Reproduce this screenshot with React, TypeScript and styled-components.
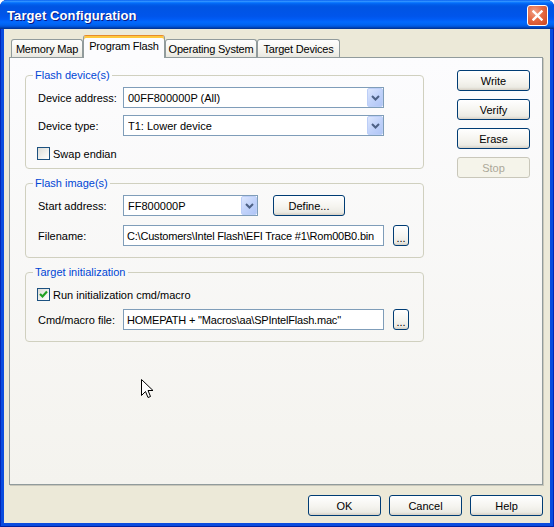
import React from "react";
import styled, { createGlobalStyle, css } from "styled-components";

const GlobalStyle = createGlobalStyle`
	html, body {
		margin: 0;
		padding: 0;
		background: #ffffff;
	}
	body {
		font-family: "Liberation Sans", Arial, sans-serif;
		font-size: 11px;
		color: #000000;
		overflow: hidden;
	}
	* {
		box-sizing: border-box;
	}
`;

const ChevronDown: React.FC = () => (
	<svg width="9" height="6" viewBox="0 0 9 6">
		<path d="M1 1 L4.5 4.5 L8 1" fill="none" stroke="#4D6185" strokeWidth="2" />
	</svg>
);

const CheckMark: React.FC = () => (
	<svg width="9" height="9" viewBox="0 0 9 9">
		<path d="M1 4 L3.5 6.5 L8 1.5" fill="none" stroke="#21A121" strokeWidth="2.2" />
	</svg>
);

const CloseIcon: React.FC = () => (
	<svg width="11" height="11" viewBox="0 0 11 11">
		<path d="M1.5 1.5 L9.5 9.5 M9.5 1.5 L1.5 9.5" stroke="#ffffff" strokeWidth="2.4" strokeLinecap="square" />
	</svg>
);

const MouseCursor: React.FC = () => (
	<svg width="13" height="21" viewBox="0 0 13 21">
		<path
			d="M0.5 0.5 L0.5 16.5 L4.5 12.5 L7 18.5 L9.5 17.5 L7 11.5 L12 11.5 Z"
			fill="#ffffff"
			stroke="#000000"
			strokeWidth="1"
		/>
	</svg>
);

interface ComboProps {
	value: string,
	width: number,
}

const Combo: React.FC<ComboProps> = ({value, width}) => (
	<ComboBox $width={width}>
		<ComboText>{value}</ComboText>
		<DropButton><ChevronDown /></DropButton>
	</ComboBox>
);

interface CheckProps {
	label: string,
	checked?: boolean,
}

const Check: React.FC<CheckProps> = ({label, checked}) => (
	<CheckLabel>
		<CheckBox>{checked && <CheckMark />}</CheckBox>
		{label}
	</CheckLabel>
);

const tabs = [
	{ name: "Memory Map", width: 72 },
	{ name: "Program Flash", width: 82 },
	{ name: "Operating System", width: 92 },
	{ name: "Target Devices", width: 83 },
];

const App: React.FC = () => {
	return (
		<Window>
			<GlobalStyle />
			<TitleBar>
				<Title>Target Configuration</Title>
				<CloseButton><CloseIcon /></CloseButton>
			</TitleBar>
			<Body>
				<TabStrip>
					{tabs.map(t => (
						<Tab key={t.name} $width={t.width} $active={t.name === "Program Flash"}>{t.name}</Tab>
					))}
				</TabStrip>
				<Panel>
					<Groups>
						<Group>
							<Legend>Flash device(s)</Legend>
							<GroupBody $gap={7} $bottom={4}>
								<Row>
									<FieldLabel>Device address:</FieldLabel>
									<Combo value="00FF800000P (All)" width={261} />
								</Row>
								<Row>
									<FieldLabel>Device type:</FieldLabel>
									<Combo value="T1: Lower device" width={261} />
								</Row>
								<Row>
									<Check label="Swap endian" />
								</Row>
							</GroupBody>
						</Group>
						<Group>
							<Legend>Flash image(s)</Legend>
							<GroupBody $gap={9} $bottom={11}>
								<Row>
									<FieldLabel>Start address:</FieldLabel>
									<Combo value="FF800000P" width={135} />
									<WideButton>Define...</WideButton>
								</Row>
								<Row>
									<FieldLabel>Filename:</FieldLabel>
									<TextField readOnly value="C:\Customers\Intel Flash\EFI Trace #1\Rom00B0.bin" />
									<BrowseButton>...</BrowseButton>
								</Row>
							</GroupBody>
						</Group>
						<Group>
							<Legend>Target initialization</Legend>
							<GroupBody $gap={4} $bottom={11}>
								<Row>
									<Check label="Run initialization cmd/macro" checked />
								</Row>
								<Row>
									<FieldLabel>Cmd/macro file:</FieldLabel>
									<TextField readOnly value={'HOMEPATH + "Macros\\aa\\SPIntelFlash.mac"'} />
									<BrowseButton>...</BrowseButton>
								</Row>
							</GroupBody>
						</Group>
					</Groups>
					<ActionColumn>
						<Button>Write</Button>
						<Button>Verify</Button>
						<Button>Erase</Button>
						<Button disabled>Stop</Button>
					</ActionColumn>
				</Panel>
				<Footer>
					<Button>OK</Button>
					<Button>Cancel</Button>
					<Button>Help</Button>
				</Footer>
			</Body>
			<CursorSpot><MouseCursor /></CursorSpot>
		</Window>
	);
};

const Window = styled.div`
	position: relative;
	width: 554px;
	height: 527px;
	display: flex;
	flex-direction: column;
	background: #0A4CDF;
	border-radius: 7px 7px 0 0;
	overflow: hidden;
	box-shadow: inset 1px 0 0 #0027B8, inset -1px 0 0 #0027B8, inset 0 -1px 0 #00209E;
`;

const TitleBar = styled.div`
	height: 29px;
	flex: none;
	display: flex;
	align-items: center;
	justify-content: space-between;
	padding: 1px 6px 0 7px;
	background: linear-gradient(to bottom,
		#0058EE 0%, #3593FF 4%, #288EFF 6%, #127DFF 8%, #036FFC 10%,
		#0262EE 14%, #0057E5 20%, #0054E3 24%, #0055EB 56%, #005BF5 66%,
		#026AFE 76%, #0062EF 86%, #0052D6 92%, #0040AB 96%, #003092 100%);
`;

const Title = styled.span`
	color: #ffffff;
	font-weight: bold;
	font-size: 13px;
	text-shadow: 1px 1px 0 #0A1883;
	letter-spacing: 0.1px;
`;

const CloseButton = styled.span`
	width: 21px;
	height: 21px;
	display: flex;
	align-items: center;
	justify-content: center;
	border: 1px solid #ffffff;
	border-radius: 3px;
	background: radial-gradient(circle at 35% 30%, #F0A188 0%, #E56A43 45%, #C9431E 100%);
`;

const Body = styled.div`
	flex: 1;
	display: flex;
	flex-direction: column;
	margin: 0 4px 4px;
	padding: 6px 7px 0 5px;
	background: #ECE9D8;
`;

const TabStrip = styled.div`
	display: flex;
	align-items: flex-end;
	height: 22px;
	padding-left: 2px;
`;

const Tab = styled.div<{ $active?: boolean, $width: number }>`
	width: ${p => p.$width}px;
	height: 18px;
	display: flex;
	align-items: center;
	justify-content: center;
	border: 1px solid #919B9C;
	border-bottom: none;
	border-radius: 3px 3px 0 0;
	background: linear-gradient(#FEFEFE, #F3F2EC 70%, #E8E7E0);
	white-space: nowrap;
	letter-spacing: -0.2px;

	${p => p.$active && css`
		position: relative;
		z-index: 1;
		height: 23px;
		margin-bottom: -1px;
		padding-bottom: 3px;
		border-top-color: #E68B2C;
		box-shadow: inset 0 2px 0 #FFC83C;
		background: #FCFCFE;
	`}
`;

const Panel = styled.div`
	flex: 1;
	display: flex;
	padding: 11px 0 0 15px;
	border: 1px solid #919B9C;
	background: linear-gradient(#FCFCFE, #F4F3EE);
	box-shadow: 1px 1px 0 #C9C7BA;
`;

const Groups = styled.div`
	width: 399px;
	display: flex;
	flex-direction: column;
	gap: 8px;
`;

const Group = styled.fieldset`
	margin: 0;
	padding: 0;
	min-width: 0;
	border: 1px solid #D0D0BF;
	border-radius: 4px;
`;

const Legend = styled.legend`
	margin-left: 7px;
	padding: 0 2px;
	line-height: 13px;
	color: #0046D5;
`;

const GroupBody = styled.div<{ $gap: number, $bottom: number }>`
	display: flex;
	flex-direction: column;
	gap: ${p => p.$gap}px;
	padding: 5px 0 ${p => p.$bottom}px 12px;
`;

const Row = styled.div`
	height: 21px;
	display: flex;
	align-items: center;
`;

const FieldLabel = styled.span`
	width: 85px;
	flex: none;
`;

const ComboBox = styled.div<{ $width: number }>`
	width: ${p => p.$width}px;
	height: 21px;
	display: flex;
	align-items: center;
	padding-left: 4px;
	border: 1px solid #7F9DB9;
	background: #ffffff;
`;

const ComboText = styled.span`
	flex: 1;
	white-space: nowrap;
	overflow: hidden;
`;

const DropButton = styled.span`
	width: 16px;
	height: 19px;
	display: flex;
	align-items: center;
	justify-content: center;
	border: 1px solid #BCCEF7;
	border-radius: 2px;
	background: linear-gradient(135deg, #DCE6FD 0%, #C2D3FA 50%, #B0C5F6 100%);
`;

const TextField = styled.input`
	width: 261px;
	height: 21px;
	margin: 0;
	padding: 0 3px;
	border: 1px solid #7F9DB9;
	background: #ffffff;
	font: inherit;
	letter-spacing: -0.2px;
	color: #000000;
	outline: none;
`;

const Button = styled.button`
	width: 73px;
	height: 21px;
	margin: 0;
	padding: 0;
	border: 1px solid #003C74;
	border-radius: 3px;
	background: linear-gradient(#FFFFFF 0%, #F5F4EF 55%, #ECEBE4 85%, #D6D0C5 100%);
	font: inherit;
	color: #000000;

	&:disabled {
		border-color: #C9C7BA;
		background: #F5F4EA;
		color: #ACA899;
	}
`;

const WideButton = styled(Button)`
	width: 72px;
	margin-left: 15px;
`;

const BrowseButton = styled(Button)`
	width: 16px;
	margin-left: 9px;
	padding-top: 4px;
`;

const CheckLabel = styled.label`
	display: flex;
	align-items: center;
	margin-left: -1px;
`;

const CheckBox = styled.span`
	width: 13px;
	height: 13px;
	display: flex;
	align-items: center;
	justify-content: center;
	margin-right: 3px;
	border: 1px solid #1C5180;
	background: linear-gradient(135deg, #DCDCD7 0%, #F5F5F2 70%, #FFFFFF 100%);
`;

const ActionColumn = styled.div`
	display: flex;
	flex-direction: column;
	gap: 8px;
	margin-left: 33px;
	padding-top: 1px;
`;

const Footer = styled.div`
	display: flex;
	justify-content: flex-end;
	gap: 8px;
	padding: 10px 0 7px;
`;

const CursorSpot = styled.div`
	position: absolute;
	left: 141px;
	top: 379px;
	width: 13px;
	height: 21px;
`;

export default App;
